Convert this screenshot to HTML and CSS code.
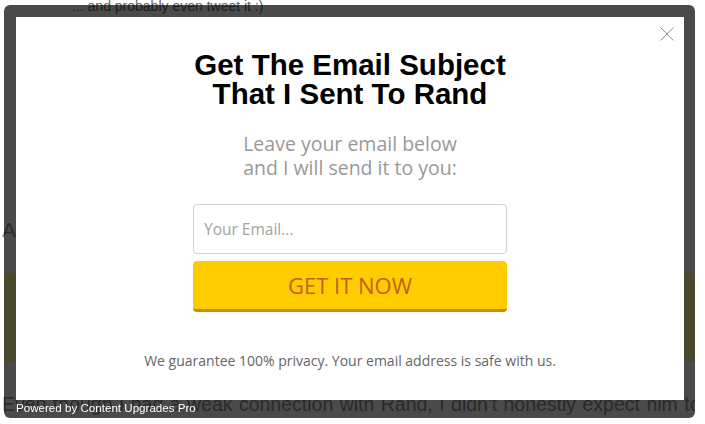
FILE: index.html
```html
<!DOCTYPE html>
<html lang="en">
<head>
<meta charset="utf-8">
<title>Get The Email Subject</title>
<link rel="stylesheet" href="styles.css">
</head>
<body>
<div class="page">
  <p class="top-line">... and probably even tweet it :)</p>
  <p class="intro">And</p>
  <div class="band"></div>
  <p class="story">Even though I had a weak connection with Rand, I didn't honestly expect him to</p>
</div>

<div class="overlay">
  <div class="modal">
    <button class="close" aria-label="Close">
      <svg width="14" height="14" viewBox="0 0 14 14"><path d="M0.5 0.5 L13.5 13.5 M13.5 0.5 L0.5 13.5" stroke="#8f8f8f" stroke-width="1" fill="none"/></svg>
    </button>
    <h2 class="title">Get The Email Subject<br>That I Sent To Rand</h2>
    <p class="subtitle">Leave your email below<br>and I will send it to you:</p>
    <form class="form">
      <input class="email" type="text" placeholder="Your Email...">
      <button class="cta" type="button">GET IT NOW</button>
    </form>
    <p class="privacy">We guarantee 100% privacy. Your email address is safe with us.</p>
  </div>
  <div class="powered">Powered by Content Upgrades Pro</div>
</div>
</body>
</html>
```

FILE: styles.css
```css
html, body {
  margin: 0;
  padding: 0;
  background: #ffffff;
}

.page {
  width: 695px;
  height: 424px;
  box-sizing: border-box;
  padding-left: 2px;
  overflow: hidden;
}

.top-line {
  margin: 0 0 0 70px;
  font-family: "Liberation Sans", Arial, sans-serif;
  font-size: 14px;
  line-height: 12px;
  color: #666666;
  white-space: nowrap;
}

.intro {
  margin: 204px 0 0 0;
  font-family: "Liberation Sans", Arial, sans-serif;
  font-size: 21px;
  line-height: 28px;
  color: #929292;
}

.band {
  margin: 29px 0 0 2px;
  height: 89px;
  background: #fffc9e;
}

.story {
  margin: 28px 0 0 0;
  font-family: "Liberation Sans", Arial, sans-serif;
  font-size: 19.5px;
  line-height: 28px;
  color: #929292;
  white-space: nowrap;
  word-spacing: 1px;
}

.overlay {
  position: fixed;
  top: 5px;
  left: 4px;
  width: 691px;
  height: 413px;
  box-sizing: border-box;
  border-radius: 6px;
  background: rgba(0, 0, 0, 0.71);
  padding: 12px 11px 0 12px;
  display: flex;
  flex-direction: column;
}

.modal {
  position: relative;
  height: 383px;
  flex: none;
  background: #ffffff;
  box-sizing: border-box;
  padding-top: 34px;
  text-align: center;
  display: flex;
  flex-direction: column;
  align-items: center;
}

.close {
  position: absolute;
  top: 10px;
  right: 10px;
  width: 14px;
  height: 14px;
  padding: 0;
  border: 0;
  background: transparent;
  display: block;
  cursor: pointer;
}

.close svg {
  display: block;
}

.title {
  margin: 0;
  font-family: "Liberation Sans", Arial, sans-serif;
  font-weight: bold;
  font-size: 29.5px;
  line-height: 28.5px;
  color: #000000;
}

.subtitle {
  margin: 24px 0 0 0;
  font-family: "Open Sans", sans-serif;
  font-size: 19.5px;
  line-height: 24px;
  color: #999999;
}

.form {
  margin: 24px 0 0 0;
  width: 314px;
  display: flex;
  flex-direction: column;
  gap: 7px;
}

.email {
  box-sizing: border-box;
  width: 100%;
  height: 50px;
  margin: 0;
  padding: 0 10px;
  border: 1px solid #cdd3d9;
  border-radius: 4px;
  background: #ffffff;
  font-family: "Open Sans", sans-serif;
  font-size: 15.5px;
  color: #555555;
  outline: none;
}

.email::placeholder {
  color: #a3a3a3;
}

.cta {
  box-sizing: border-box;
  width: 100%;
  height: 51px;
  margin: 0;
  padding: 0;
  border: 0;
  border-bottom: 3px solid #d18a00;
  border-radius: 4px;
  background: #ffcc00;
  font-family: "Open Sans", sans-serif;
  font-size: 22px;
  line-height: 48px;
  color: #c2611f;
  cursor: pointer;
}

.privacy {
  margin: 39px 0 0 0;
  font-family: "Open Sans", sans-serif;
  font-size: 14px;
  line-height: 20px;
  color: #666666;
}

.powered {
  font-family: "Liberation Sans", Arial, sans-serif;
  font-size: 11.6px;
  line-height: 16px;
  color: #ffffff;
  white-space: nowrap;
}
```
